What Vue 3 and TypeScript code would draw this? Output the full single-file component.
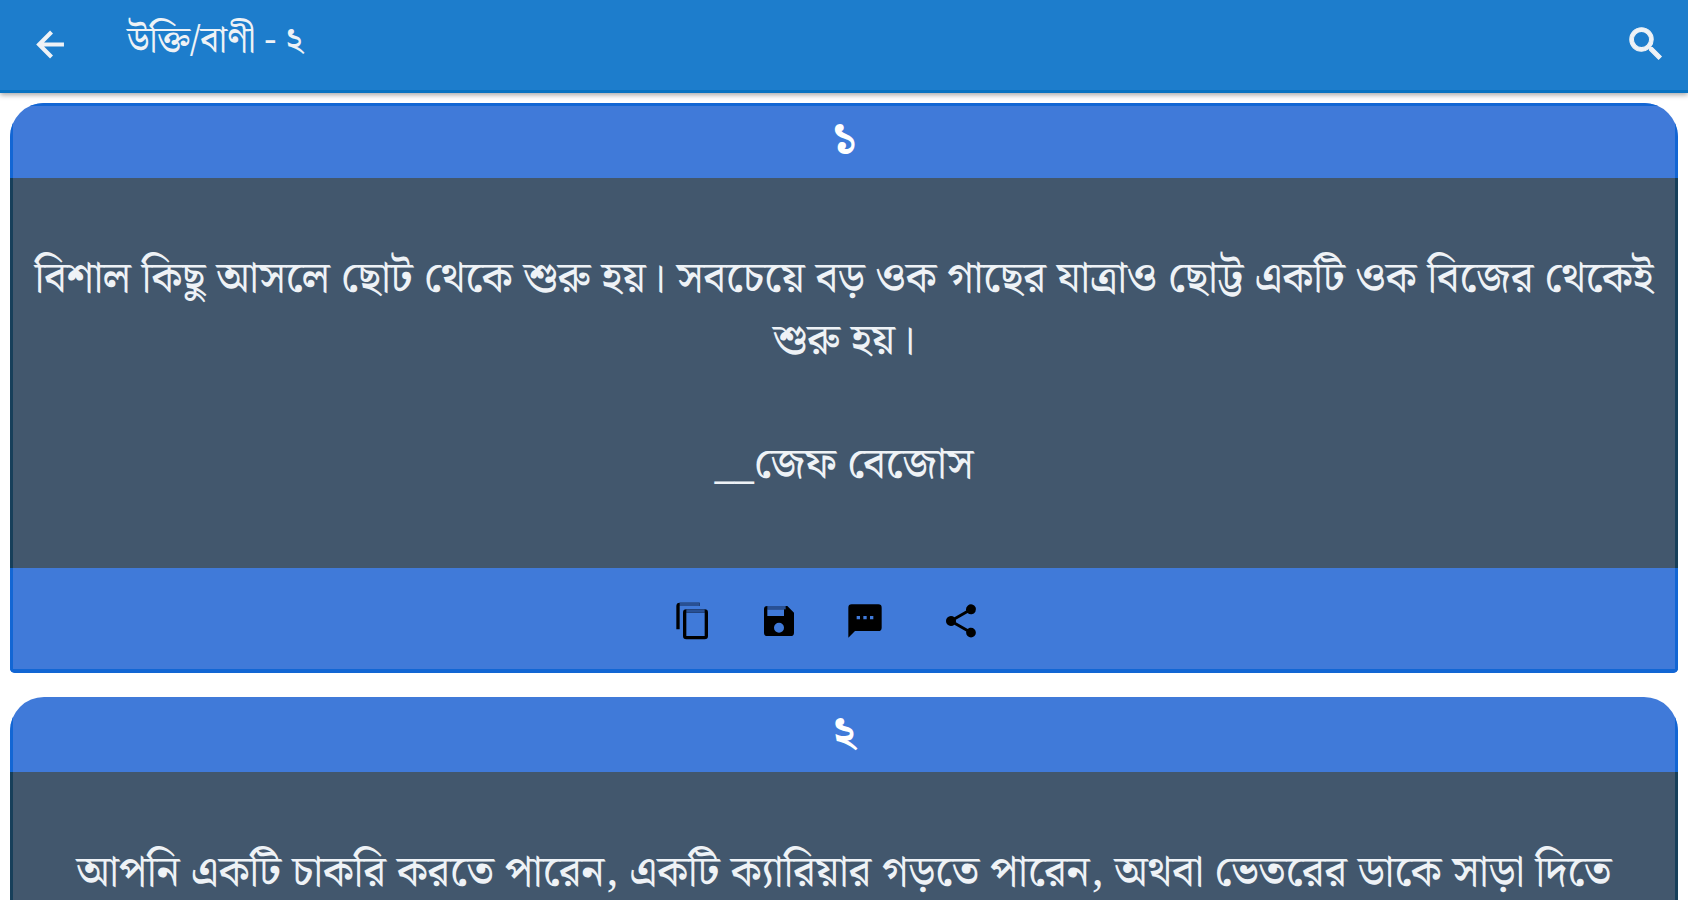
<script setup lang="ts">
interface Quote {
  id: number
  label: string
  text: string
  author: string
}

const title = 'উক্তি/বাণী - ২'

const quotes: Quote[] = [
  {
    id: 1,
    label: '১',
    text: 'বিশাল কিছু আসলে ছোট থেকে শুরু হয়। সবচেয়ে বড় ওক গাছের যাত্রাও ছোট্ট একটি ওক বিজের থেকেই শুরু হয়।',
    author: '__জেফ বেজোস',
  },
  {
    id: 2,
    label: '২',
    text: 'আপনি একটি চাকরি করতে পারেন, একটি ক্যারিয়ার গড়তে পারেন, অথবা ভেতরের ডাকে সাড়া দিতে',
    author: '',
  },
]
</script>

<template>
  <div class="screen">
    <header class="app-bar">
      <button class="icon-button" type="button" aria-label="Back">
        <svg class="back-icon" viewBox="0 0 28 28" aria-hidden="true">
          <path d="M27 14H3M15 2L3 14l12 12" fill="none" stroke="currentColor" stroke-width="4" />
        </svg>
      </button>
      <h1 class="title">{{ title }}</h1>
      <button class="icon-button" type="button" aria-label="Search">
        <svg class="search-icon" viewBox="2 2 20 20" aria-hidden="true">
          <path fill="currentColor" stroke="currentColor" stroke-width="0.6" d="M15.5 14h-.79l-.28-.27A6.47 6.47 0 0 0 16 9.5 6.5 6.5 0 1 0 9.5 16c1.61 0 3.09-.59 4.23-1.57l.27.28v.79l5 4.99L20.49 19l-4.99-5zm-6 0C7.01 14 5 11.99 5 9.5S7.01 5 9.5 5 14 7.01 14 9.5 11.99 14 9.5 14z" />
        </svg>
      </button>
    </header>

    <main class="list">
      <article v-for="quote in quotes" :key="quote.id" class="card">
        <h2 class="card-head">{{ quote.label }}</h2>
        <div class="card-body">
          <p>{{ quote.text }}</p>
          <p v-if="quote.author" class="author">{{ quote.author }}</p>
        </div>
        <footer class="card-actions">
          <button type="button" aria-label="Copy">
            <svg viewBox="0 0 24 24" aria-hidden="true">
              <path d="M16 1H4a2 2 0 0 0-2 2v14h2V3h12z" />
              <path d="M19 5H8a2 2 0 0 0-2 2v14a2 2 0 0 0 2 2h11a2 2 0 0 0 2-2V7a2 2 0 0 0-2-2zm0 16H8V7h11z" />
              <path class="tint" d="M4 1h12v2H4zM8 5h11v2H8z" />
            </svg>
          </button>
          <button type="button" aria-label="Save">
            <svg viewBox="0 0 24 24" aria-hidden="true">
              <path d="M17 3H5a2 2 0 0 0-2 2v14a2 2 0 0 0 2 2h14a2 2 0 0 0 2-2V7zm-5 16a3 3 0 1 1 0-6 3 3 0 0 1 0 6zm3-10H5V5h10z" />
              <path class="tint" d="M5 3h11v2H5z" />
            </svg>
          </button>
          <button type="button" aria-label="Message">
            <svg viewBox="0 0 24 24" aria-hidden="true">
              <path d="M20 2H4a2 2 0 0 0-2 2v18l4-4h14a2 2 0 0 0 2-2V4a2 2 0 0 0-2-2zM9 11H7V9h2zm4 0h-2V9h2zm4 0h-2V9h2z" />
            </svg>
          </button>
          <button class="share" type="button" aria-label="Share">
            <svg viewBox="0 0 24 24" aria-hidden="true">
              <path d="M18 16.08c-.76 0-1.44.3-1.96.77L8.91 12.7c.05-.23.09-.46.09-.7s-.04-.47-.09-.7l7.05-4.11A3 3 0 1 0 15 5c0 .24.04.47.09.7L8.04 9.81a3 3 0 1 0 0 4.38l7.12 4.16c-.05.21-.08.43-.08.65a2.92 2.92 0 1 0 2.92-2.92z" />
            </svg>
          </button>
        </footer>
      </article>
    </main>
  </div>
</template>

<style>
body {
  margin: 0;
  background: #fff;
}
</style>

<style scoped>
.screen {
  height: 100vh;
  overflow: hidden;
  font-family: 'Noto Serif Bengali', 'Noto Sans Bengali', 'Noto Sans', sans-serif;
  color: #eef2f6;
}

button {
  display: flex;
  padding: 0;
  border: 0;
  background: none;
  color: inherit;
}

.app-bar {
  position: relative;
  display: flex;
  align-items: center;
  box-sizing: border-box;
  height: 93px;
  padding: 0 24px 2px 36px;
  border-bottom: 3px solid #0873c2;
  background: #1d7dcc;
  box-shadow: 0 2px 5px rgba(0, 0, 0, 0.35);
}

.back-icon {
  width: 29px;
  height: 29px;
}

.search-icon {
  width: 36px;
  height: 36px;
}

.title {
  flex: 1;
  margin: 0 0 0 62px;
  padding-bottom: 4px;
  font-size: 36px;
  font-weight: 500;
  line-height: 48px;
}

.list {
  display: flex;
  flex-direction: column;
  gap: 24px;
  padding: 10px;
}

.card {
  overflow: hidden;
  border-radius: 34px 34px 5px 5px;
}

.card-head,
.card-actions {
  box-sizing: border-box;
  border: 0 solid #1266d4;
  border-width: 0 3px;
  background: #407ad9;
}

.card-head {
  height: 75px;
  margin: 0;
  color: #fff;
  font-size: 44px;
  font-weight: 700;
  line-height: 74px;
  text-align: center;
}

.card:first-child .card-head {
  border-top-width: 3px;
  line-height: 68px;
}

.card-body {
  padding: 71px 16px;
  border: 0 solid #173f5a;
  border-width: 0 3px;
  background: #42576d;
  font-size: 43px;
  font-weight: 500;
  line-height: 62px;
  text-align: center;
}

.card-body p {
  margin: 0;
}

.card-body .author {
  margin-top: 62px;
}

.card-actions {
  display: flex;
  align-items: center;
  justify-content: center;
  gap: 46px;
  height: 105px;
  padding: 4px 34px 0 0;
  border-bottom-width: 4px;
  color: #000;
}

.card-actions svg {
  width: 40px;
  height: 40px;
  fill: currentColor;
}

.card-actions .tint {
  fill: #285094;
}

.card-actions .share {
  margin-left: 10px;
}
</style>
